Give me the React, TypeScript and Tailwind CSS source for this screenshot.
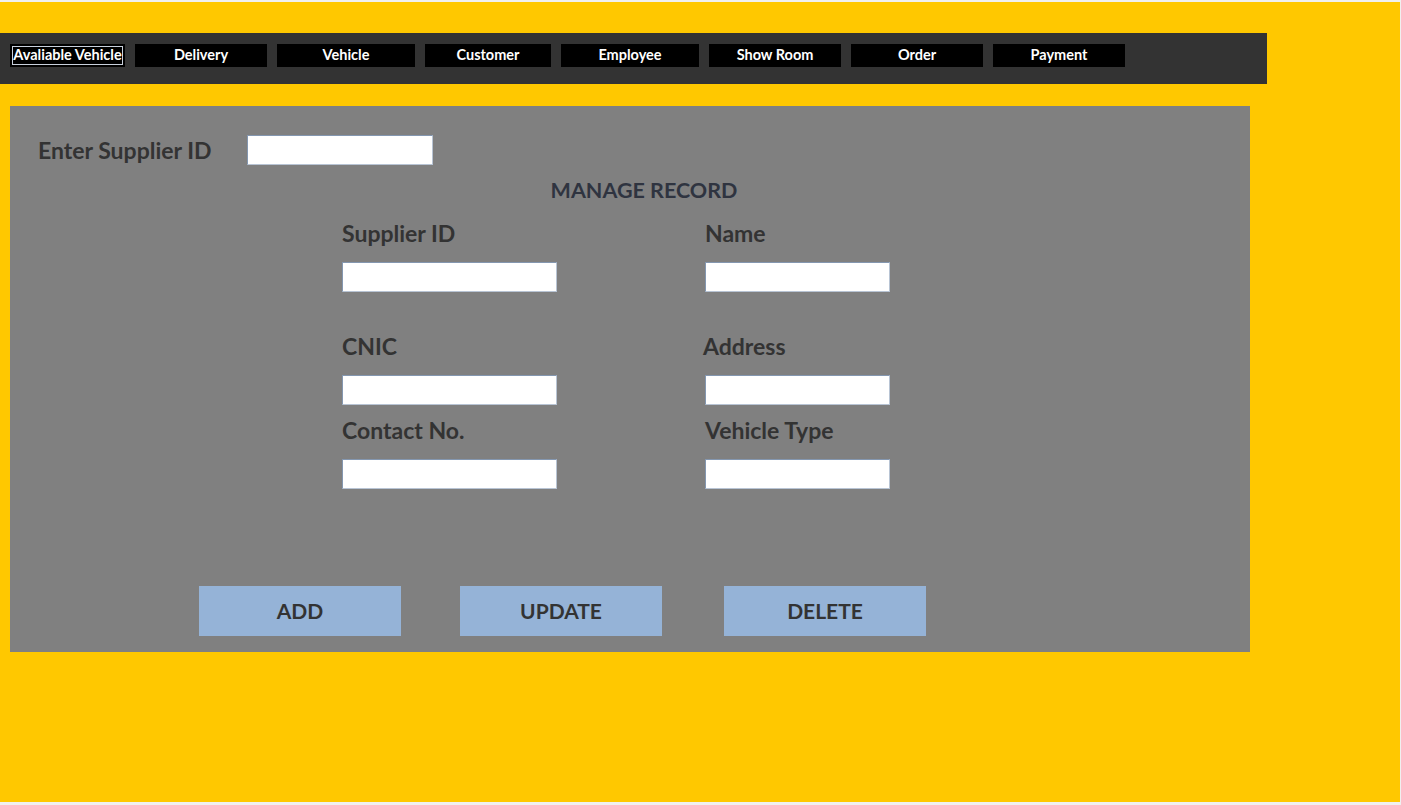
const navItems = [
  { label: "Delivery", w: "w-[132px]" },
  { label: "Vehicle", w: "w-[138px]" },
  { label: "Customer", w: "w-[126px]" },
  { label: "Employee", w: "w-[138px]" },
  { label: "Show Room", w: "w-[132px]" },
  { label: "Order", w: "w-[132px]" },
  { label: "Payment", w: "w-[132px]" },
];

function Field({ label, className = "" }: { label: string; className?: string }) {
  return (
    <div className={className}>
      <div className="h-[26px] text-[23px] font-bold leading-[26px] text-[#333333]">{label}</div>
    </div>
  );
}

function Box({ w }: { w: string }) {
  return (
    <input
      type="text"
      className={`${w} h-[30px] border border-[#8497b0] border-b-[#b8c4d4] border-r-[#b8c4d4] bg-white outline-none`}
    />
  );
}

export default function App() {
  return (
    <div className="min-h-[805px] w-full bg-[#f0f0f0] pt-[2px] font-['Lato','Open_Sans',sans-serif]">
      <div className="h-[800px] w-[1400px] bg-[#ffc800] pt-[31px]">
        {/* top nav */}
        <div className="flex h-[51px] w-[1267px] items-start bg-[#333333] pl-[10px] pt-[11px]">
          <div className="flex h-[23px] w-[115px] items-center justify-center bg-black p-[2px]">
            <div className="flex h-full w-full items-center justify-center border border-[#c8d0dc] pb-[1px] text-[14.5px] font-bold text-white">
              Avaliable Vehicle
            </div>
          </div>
          {navItems.map((n) => (
            <div
              key={n.label}
              className={`${n.w} ml-[10px] flex h-[23px] items-center justify-center bg-black pb-[1px] text-[14.5px] font-bold text-white`}
            >
              {n.label}
            </div>
          ))}
        </div>

        {/* panel */}
        <div className="ml-[10px] mt-[22px] h-[546px] w-[1240px] bg-[#808080] pt-[29px]">
          <div className="flex h-[30px] items-center">
            <div className="ml-[28px] w-[209px] text-[23px] font-bold leading-[30px] text-[#333333]">Enter Supplier ID</div>
            <Box w="w-[186px]" />
          </div>

          <div className="mt-[10px] h-[30px] pl-[28px] text-center text-[21.5px] font-bold leading-[30px] text-[#2f3440]">
            MANAGE RECORD
          </div>

          <div className="mt-[15px] flex pl-[332px]">
            <Field label="Supplier ID" className="w-[363px]" />
            <Field label="Name" />
          </div>
          <div className="mt-[16px] flex pl-[332px]">
            <div className="w-[363px]"><Box w="w-[215px]" /></div>
            <Box w="w-[185px]" />
          </div>

          <div className="mt-[41px] flex pl-[332px]">
            <Field label="CNIC" className="w-[361px]" />
            <Field label="Address" />
          </div>
          <div className="mt-[16px] flex pl-[332px]">
            <div className="w-[363px]"><Box w="w-[215px]" /></div>
            <Box w="w-[185px]" />
          </div>

          <div className="mt-[12px] flex pl-[332px]">
            <Field label="Contact No." className="w-[363px]" />
            <Field label="Vehicle Type" />
          </div>
          <div className="mt-[16px] flex pl-[332px]">
            <div className="w-[363px]"><Box w="w-[215px]" /></div>
            <Box w="w-[185px]" />
          </div>

          <div className="mt-[97px] flex pl-[189px]">
            <button className="h-[50px] w-[202px] bg-[#95b3d7] text-[21px] font-bold text-[#333333]">ADD</button>
            <button className="ml-[59px] h-[50px] w-[202px] bg-[#95b3d7] text-[21px] font-bold text-[#333333]">UPDATE</button>
            <button className="ml-[62px] h-[50px] w-[202px] bg-[#95b3d7] text-[21px] font-bold text-[#333333]">DELETE</button>
          </div>
        </div>
      </div>
    </div>
  );
}
